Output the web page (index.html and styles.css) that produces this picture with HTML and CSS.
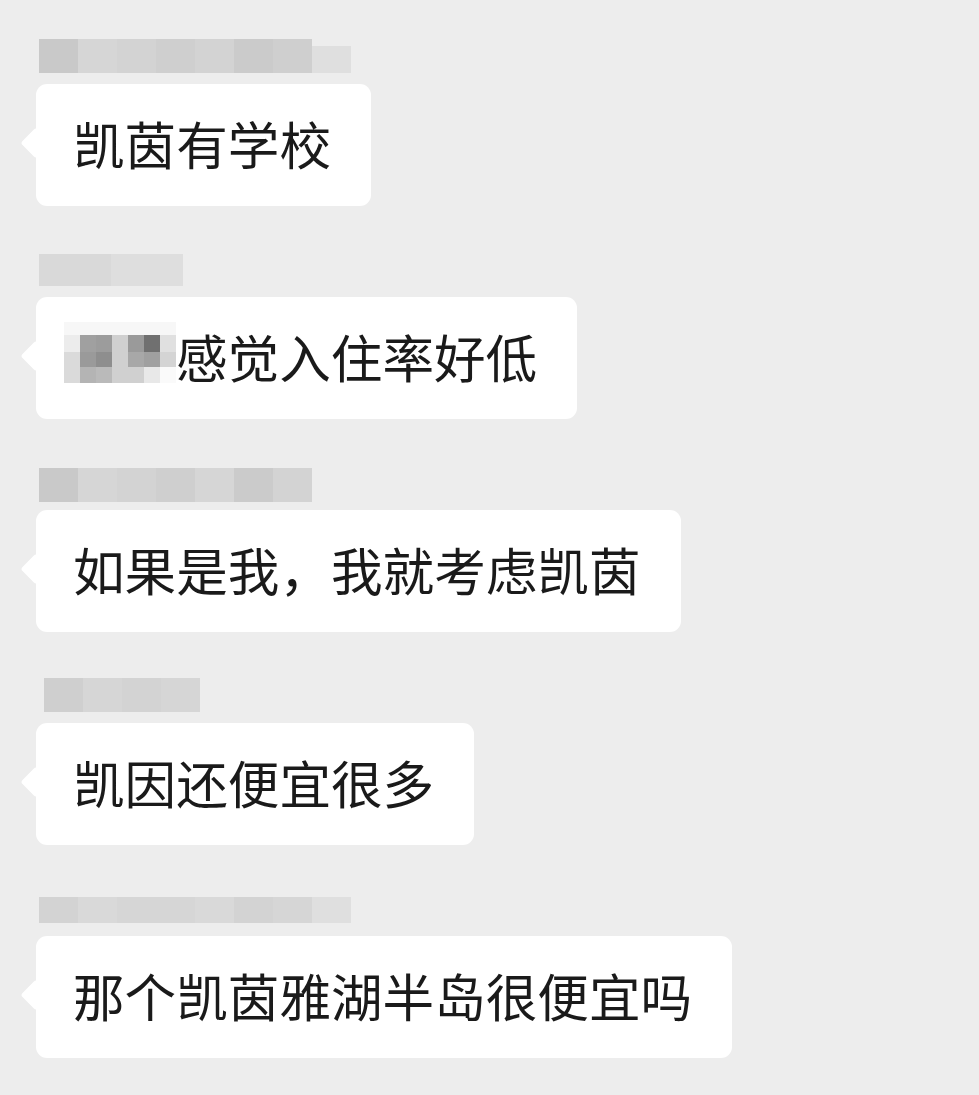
FILE: index.html
```html
<!DOCTYPE html>
<html lang="zh-CN">
<head>
<meta charset="utf-8">
<title>聊天记录</title>
<link rel="stylesheet" href="styles.css">
</head>
<body>
<div class="chat">

  <div class="msg">
    <div class="name name-1" aria-hidden="true">
      <span class="c1"></span><span class="c2"></span><span class="c3"></span><span class="c4"></span><span class="c3"></span><span class="c5"></span><span class="c4"></span><span class="c6 low"></span>
    </div>
    <div class="bubble">凯茵有学校</div>
  </div>

  <div class="msg">
    <div class="name name-2" aria-hidden="true">
      <span class="c7"></span><span class="c7"></span><span class="c8"></span><span class="c8"></span>
    </div>
    <div class="bubble">
      <span class="mosaic" aria-hidden="true">
        <i class="m0"></i><i class="m0"></i><i class="m0"></i><i class="m0"></i><i class="m0"></i><i class="m0"></i><i class="m0"></i>
        <i class="ma"></i><i class="mb"></i><i class="mc"></i><i class="md"></i><i class="me"></i><i class="mf"></i><i class="mg"></i>
        <i class="mh"></i><i class="mi"></i><i class="mj"></i><i class="md"></i><i class="mk"></i><i class="ml"></i><i class="mm"></i>
        <i class="mh"></i><i class="mn"></i><i class="mo"></i><i class="md"></i><i class="md"></i><i class="mp"></i><i class="mq"></i>
      </span><span>感觉入住率好低</span>
    </div>
  </div>

  <div class="msg">
    <div class="name name-3" aria-hidden="true">
      <span class="c1"></span><span class="c2"></span><span class="c3"></span><span class="c4"></span><span class="c2"></span><span class="c5"></span><span class="c3"></span>
    </div>
    <div class="bubble">如果是我，我就考虑凯茵</div>
  </div>

  <div class="msg">
    <div class="name name-4" aria-hidden="true">
      <span class="c4"></span><span class="c2"></span><span class="c3"></span><span class="c2"></span>
    </div>
    <div class="bubble">凯因还便宜很多</div>
  </div>

  <div class="msg">
    <div class="name name-5" aria-hidden="true">
      <span class="c3"></span><span class="c9"></span><span class="c2"></span><span class="c2"></span><span class="c9"></span><span class="c3"></span><span class="c2"></span><span class="c6"></span>
    </div>
    <div class="bubble">那个凯茵雅湖半岛很便宜吗</div>
  </div>

</div>
</body>
</html>
```

FILE: styles.css
```css
html, body {
  margin: 0;
  padding: 0;
  background: #ededed;
}

body {
  font-family: "Noto Sans CJK SC", "Noto Sans", sans-serif;
  color: #1a1a1a;
}

.chat {
  display: flex;
  flex-direction: column;
  gap: 46px;
  padding: 39px 0 0 36px;
}

.msg {
  display: flex;
  flex-direction: column;
  align-items: flex-start;
  gap: 11px;
}

.name {
  display: flex;
  height: 34px;
  margin-left: 3px;
}

.name span {
  display: block;
  width: 39px;
  height: 34px;
}

.name span.low {
  height: 27px;
  margin-top: 7px;
}

.name-2 span {
  width: 36px;
  height: 32px;
  margin-top: 2px;
}

.name-3 span {
  margin-top: 3px;
}

.name-5 span {
  height: 26px;
  margin-top: 6px;
}

.name-4 span:first-child {
  margin-left: 5px;
}

.c1 { background: #c9c9c9; }
.c2 { background: #d6d6d6; }
.c3 { background: #d3d3d3; }
.c4 { background: #cfcfcf; }
.c5 { background: #cbcbcb; }
.c6 { background: #dfdfdf; }
.c7 { background: #d9d9d9; }
.c8 { background: #dedede; }
.c9 { background: #d9d9d9; }

.bubble {
  position: relative;
  display: flex;
  align-items: center;
  height: 122px;
  box-sizing: border-box;
  padding: 0 40px 4px 37px;
  background: #ffffff;
  border-radius: 11px;
  font-size: 51.6px;
  line-height: 1;
  white-space: nowrap;
}

.bubble::before {
  content: "";
  position: absolute;
  left: -11px;
  top: 50%;
  width: 22px;
  height: 22px;
  margin-top: -13px;
  background: #ffffff;
  border-radius: 3px;
  transform: rotate(45deg);
}

.mosaic {
  display: grid;
  grid-template-columns: repeat(7, 1fr);
  grid-template-rows: 13px 17px 15px 16px;
  width: 112px;
  margin-left: -9px;
  margin-bottom: 7px;
}

.mosaic i {
  display: block;
}

.m0 { background: #f7f7f7; }
.ma { background: #ececec; }
.mb { background: #a0a0a0; }
.mc { background: #9c9c9c; }
.md { background: #d0d0d0; }
.me { background: #9a9a9a; }
.mf { background: #707070; }
.mg { background: #e0e0e0; }
.mh { background: #dadada; }
.mi { background: #9a9a9a; }
.mj { background: #8e8e8e; }
.mk { background: #a8a8a8; }
.ml { background: #a0a0a0; }
.mm { background: #d4d4d4; }
.mn { background: #b4b4b4; }
.mo { background: #bababa; }
.mp { background: #e8e8e8; }
.mq { background: #fafafa; }
```
